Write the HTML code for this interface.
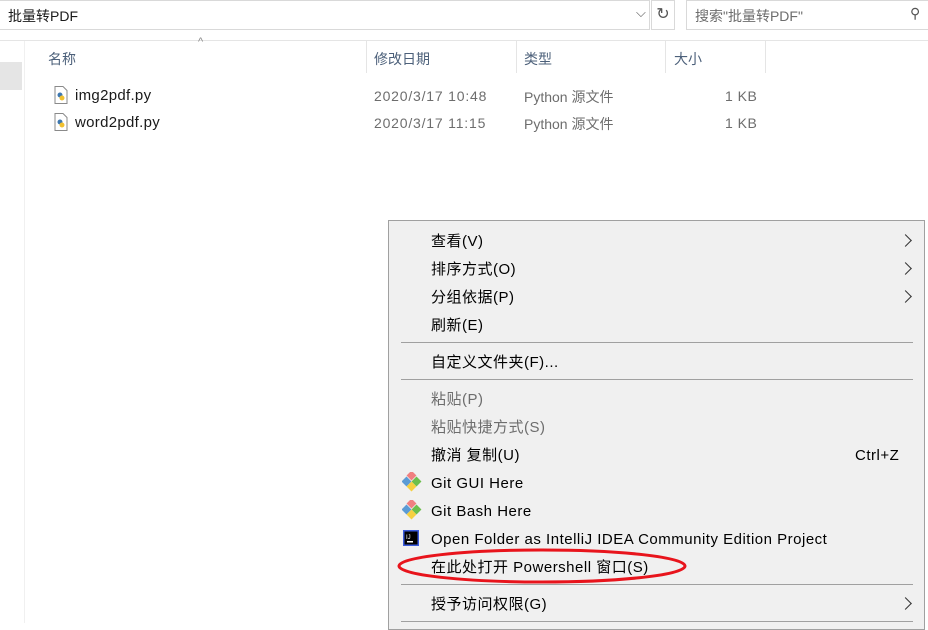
<!DOCTYPE html>
<html><head><meta charset="utf-8"><style>
body{margin:0;width:928px;height:623px;background:#fff;position:relative;overflow:hidden;font-family:"Liberation Sans","Noto Sans CJK SC",sans-serif;color:#1a1a1a}
.a{position:absolute;white-space:nowrap}
.m{position:absolute;left:388px;top:220px;width:537px;height:410px;background:#f0f0f0;border:1px solid #a0a0a0;box-sizing:border-box}
.it{position:absolute;left:42px;font-size:15px;color:#000;line-height:20px;letter-spacing:0.5px}
.dis{color:#6d6d6d}
.sep{position:absolute;left:12px;width:512px;height:1px;background:#a0a0a0}
.chev{position:absolute;left:512px;width:8px;height:8px;border-right:1.3px solid #333;border-top:1.3px solid #333;transform:rotate(45deg)}
.g{letter-spacing:0.8px}
</style></head><body>
<div class="a" style="left:0;top:0;width:650px;height:30px;border:1px solid #d9d9d9;border-left:none;box-sizing:border-box"></div>
<div class="a" style="left:8px;top:6px;font-size:14px">批量转PDF</div>
<div class="a" style="left:636px;top:5px;font-size:13px;color:#555">⌵</div>
<div class="a" style="left:651px;top:0;width:24px;height:30px;border:1px solid #d9d9d9;box-sizing:border-box;font-size:16px;color:#555;text-align:center;line-height:28px">↻</div>
<div class="a" style="left:686px;top:0;width:242px;height:30px;border:1px solid #d9d9d9;border-right:none;box-sizing:border-box"></div>
<div class="a" style="left:695px;top:6px;font-size:14px;color:#6d6d6d">搜索"批量转PDF"</div>
<div class="a" style="left:910px;top:5px;font-size:14px;color:#555">⚲</div>
<div class="a" style="left:0;top:40px;width:928px;height:1px;background:#e5e5e5"></div>
<div class="a" style="left:24px;top:41px;width:1px;height:582px;background:#f0f0f0"></div>
<div class="a" style="left:0;top:62px;width:22px;height:28px;background:#e5e5e5"></div>
<div class="a" style="left:198px;top:36px;font-size:11px;color:#888">^</div>
<div class="a" style="left:48px;top:49px;font-size:14px;color:#4c607a">名称</div>
<div class="a" style="left:366px;top:41px;width:1px;height:32px;background:#e5e5e5"></div>
<div class="a" style="left:374px;top:49px;font-size:14px;color:#4c607a">修改日期</div>
<div class="a" style="left:516px;top:41px;width:1px;height:32px;background:#e5e5e5"></div>
<div class="a" style="left:524px;top:49px;font-size:14px;color:#4c607a">类型</div>
<div class="a" style="left:665px;top:41px;width:1px;height:32px;background:#e5e5e5"></div>
<div class="a" style="left:674px;top:49px;font-size:14px;color:#4c607a">大小</div>
<div class="a" style="left:765px;top:41px;width:1px;height:32px;background:#e5e5e5"></div>
<svg class="a" style="left:54px;top:86px" width="14" height="18"><path d="M1 .5h8l4 4v13H1z" fill="#fff" stroke="#8a8a8a"/><circle cx="6" cy="9" r="2.5" fill="#3e78b0"/><circle cx="8" cy="12" r="2.5" fill="#f0c030"/></svg>
<svg class="a" style="left:54px;top:113px" width="14" height="18"><path d="M1 .5h8l4 4v13H1z" fill="#fff" stroke="#8a8a8a"/><circle cx="6" cy="9" r="2.5" fill="#3e78b0"/><circle cx="8" cy="12" r="2.5" fill="#f0c030"/></svg>
<div class="a g" style="left:75px;top:87px;font-size:15px;letter-spacing:0.3px">img2pdf.py</div>
<div class="a g" style="left:75px;top:114px;font-size:15px;letter-spacing:0.3px">word2pdf.py</div>
<div class="a g" style="left:374px;top:88px;font-size:14px;color:#6d6d6d">2020/3/17 10:48</div>
<div class="a g" style="left:374px;top:115px;font-size:14px;color:#6d6d6d">2020/3/17 11:15</div>
<div class="a" style="left:524px;top:87px;font-size:14px;color:#6d6d6d">Python 源文件</div>
<div class="a" style="left:524px;top:114px;font-size:14px;color:#6d6d6d">Python 源文件</div>
<div class="a" style="left:725px;top:88px;font-size:14px;color:#6d6d6d;letter-spacing:0.5px">1 KB</div>
<div class="a" style="left:725px;top:115px;font-size:14px;color:#6d6d6d;letter-spacing:0.5px">1 KB</div>
<div class="m">
<div class="it" style="top:11px">查看(V)</div><div class="chev" style="top:15px"></div>
<div class="it" style="top:39px">排序方式(O)</div><div class="chev" style="top:43px"></div>
<div class="it" style="top:67px">分组依据(P)</div><div class="chev" style="top:71px"></div>
<div class="it" style="top:95px">刷新(E)</div>
<div class="sep" style="top:121px"></div>
<div class="it" style="top:132px">自定义文件夹(F)...</div>
<div class="sep" style="top:158px"></div>
<div class="it dis" style="top:169px">粘贴(P)</div>
<div class="it dis" style="top:197px">粘贴快捷方式(S)</div>
<div class="it" style="top:225px">撤消 复制(U)</div><div class="it" style="left:466px;top:225px">Ctrl+Z</div>
<svg class="a" style="left:13px;top:251px" width="20" height="20"><rect x="6" y="0" width="7" height="7" fill="#f08080" transform="rotate(45 9.5 3.5)"/><rect x="1" y="6" width="7" height="7" fill="#5b9bd5" transform="rotate(45 4.5 9.5)"/><rect x="11" y="6" width="7" height="7" fill="#6cbf4c" transform="rotate(45 14.5 9.5)"/><rect x="6" y="11" width="7" height="7" fill="#f5d040" transform="rotate(45 9.5 14.5)"/></svg>
<div class="it" style="top:253px">Git GUI Here</div>
<svg class="a" style="left:13px;top:279px" width="20" height="20"><rect x="6" y="0" width="7" height="7" fill="#f08080" transform="rotate(45 9.5 3.5)"/><rect x="1" y="6" width="7" height="7" fill="#5b9bd5" transform="rotate(45 4.5 9.5)"/><rect x="11" y="6" width="7" height="7" fill="#6cbf4c" transform="rotate(45 14.5 9.5)"/><rect x="6" y="11" width="7" height="7" fill="#f5d040" transform="rotate(45 9.5 14.5)"/></svg>
<div class="it" style="top:281px">Git Bash Here</div>
<svg class="a" style="left:14px;top:309px" width="16" height="16"><rect width="16" height="16" fill="#3b5bdb"/><rect x="1.5" y="1.5" width="13" height="13" fill="#000"/><rect x="4" y="11" width="6" height="1.5" fill="#fff"/><text x="3" y="9" font-size="6" fill="#fff" font-family="Liberation Sans">IJ</text></svg>
<div class="it" style="top:309px">Open Folder as IntelliJ IDEA Community Edition Project</div>
<div class="it" style="top:337px">在此处打开 Powershell 窗口(S)</div>
<div class="sep" style="top:363px"></div>
<div class="it" style="top:374px">授予访问权限(G)</div><div class="chev" style="top:378px"></div>
<div class="sep" style="top:400px"></div>
</div>
<svg class="a" style="left:395px;top:545px" width="300" height="45"><ellipse cx="147" cy="21" rx="143" ry="16" fill="none" stroke="#e8141c" stroke-width="3"/></svg>
</body></html>
